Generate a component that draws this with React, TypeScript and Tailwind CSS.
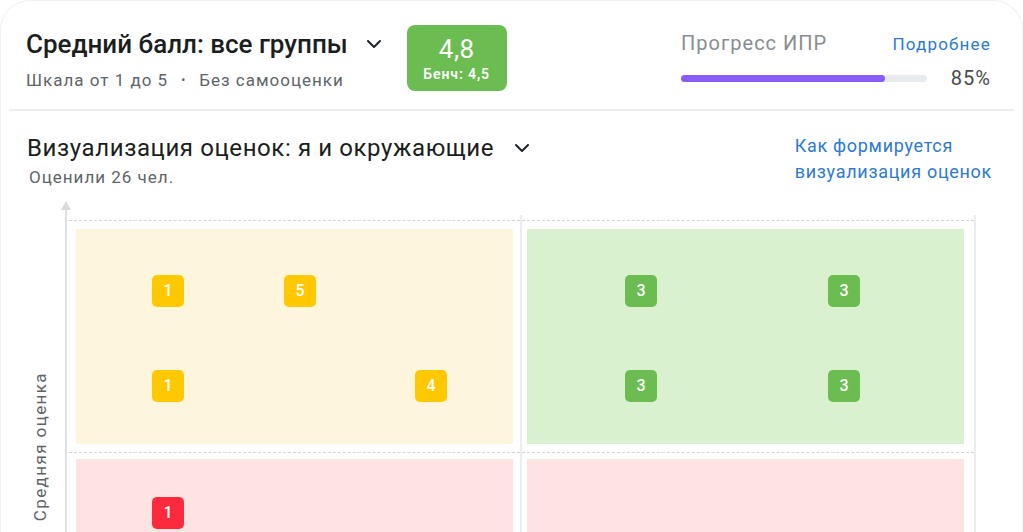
import React from "react";

type Dot = { x: number; y: number; n: number };

const Chevron = () => (
  <svg width="16" height="10" viewBox="0 0 16 10" fill="none" className="shrink-0">
    <path d="M2 2l6 6 6-6" stroke="#1f2326" strokeWidth="2" strokeLinecap="round" strokeLinejoin="round" />
  </svg>
);

function Cell({ bg, badge, dots }: { bg: string; badge: string; dots: Dot[] }) {
  return (
    <div className={`relative h-[215px] w-[437px] ${bg}`}>
      {dots.map((d, i) => (
        <div
          key={i}
          className={`absolute flex h-[32px] w-[32px] items-center justify-center rounded-[5px] text-[16px] font-medium text-white ${badge}`}
          style={{ left: d.x, top: d.y }}
        >
          {d.n}
        </div>
      ))}
    </div>
  );
}

export default function App() {
  return (
    <div className="h-screen overflow-hidden bg-white font-['Roboto',sans-serif]">
      <div className="h-[560px] rounded-t-[30px] border border-b-0 border-[#eff1f2]">
        {/* шапка */}
        <div className="flex items-start pl-[25px] pr-[31px] pt-[24px] pb-[18px]">
          <div className="pt-[3px]">
            <div className="flex items-center gap-[18px]">
              <h1 className="text-[26px] leading-[32px] font-medium text-[#1b1e21]">Средний балл: все группы</h1>
              <Chevron />
            </div>
            <div className="mt-[10px] flex items-center gap-[13px] text-[17px] leading-[20px] tracking-[1px] text-[#5e6469]">
              <span>Шкала от 1 до 5</span>
              <span className="text-[12px]">•</span>
              <span>Без самооценки</span>
            </div>
          </div>
          <div className="ml-[25px] flex h-[66px] w-[100px] flex-col items-center justify-center rounded-[8px] bg-[#6cbd51] text-white">
            <div className="text-[26px] leading-[28px] tracking-[0.5px]">4,8</div>
            <div className="mt-[3px] text-[14px] leading-[16px] font-semibold tracking-[0.9px]">Бенч: 4,5</div>
          </div>
          <div className="ml-auto w-[310px] pt-[5px]">
            <div className="flex items-baseline justify-between">
              <span className="text-[20px] leading-[26px] tracking-[1px] text-[#878d92]">Прогресс ИПР</span>
              <span className="text-[17px] leading-[22px] tracking-[1.2px] text-[#2c7ad3]">Подробнее</span>
            </div>
            <div className="mt-[10px] flex items-center justify-between">
              <div className="h-[7px] w-[246px] rounded-full bg-[#e8ebed]">
                <div className="h-full w-[83%] rounded-full bg-[#8a5cf5]" />
              </div>
              <span className="text-[20px] leading-[24px] tracking-[1px] text-[#464b50]">85%</span>
            </div>
          </div>
        </div>
        <div className="mx-[8px] h-[2px] bg-[#eceef0]" />

        {/* визуализация */}
        <div className="flex items-start pl-[26px] pr-[30px] pt-[21px]">
          <div>
            <div className="flex items-center gap-[20px]">
              <h2 className="text-[24px] leading-[32px] tracking-[0.6px] text-[#1b1e21]">Визуализация оценок: я и окружающие</h2>
              <Chevron />
            </div>
            <div className="mt-[3px] pl-[2px] text-[17px] leading-[20px] tracking-[1px] text-[#5e6469]">Оценили 26 чел.</div>
          </div>
          <div className="ml-auto pt-[1px] text-[18px] leading-[26px] tracking-[0.7px] text-[#2c7ad3]">
            Как формируется
            <br />
            визуализация оценок
          </div>
        </div>

        <div className="mt-[15px] flex">
          <div className="flex w-[64px] items-center justify-center pl-[16px]">
            <span className="mt-[10px] rotate-180 text-[17px] tracking-[1.4px] text-[#5e6469] [writing-mode:vertical-rl]">Средняя оценка</span>
          </div>
          <div className="relative border-l-2 border-[#dde1e4] pt-[13px]">
            <svg width="10" height="9" viewBox="0 0 10 9" className="absolute -left-[6px] -top-[1px]">
              <path d="M5 0L10 9H0z" fill="#d6dadd" />
            </svg>
            <div className="flex">
              <div className="ml-[2px] w-[453px] border-r-2 border-[#eaecee] pt-[5px]">
                <div className="border-t border-dashed border-[#d2d6da] px-[7px] pt-[8px] pb-[8px]">
                  <Cell
                    bg="bg-[#fef6dc]"
                    badge="bg-[#ffc800]"
                    dots={[
                      { x: 76, y: 46, n: 1 },
                      { x: 208, y: 46, n: 5 },
                      { x: 76, y: 141, n: 1 },
                      { x: 339, y: 141, n: 4 },
                    ]}
                  />
                </div>
                <div className="border-t border-dashed border-[#d2d6da] px-[7px] pt-[6px] pb-[8px]">
                  <Cell bg="bg-[#fee3e3]" badge="bg-[#fd2a3e]" dots={[{ x: 76, y: 38, n: 1 }]} />
                </div>
              </div>
              <div className="w-[454px] border-r-2 border-[#eaecee] pt-[5px]">
                <div className="border-t border-dashed border-[#d2d6da] pl-[5px] pr-[10px] pt-[8px] pb-[8px]">
                  <Cell
                    bg="bg-[#d9f1ce]"
                    badge="bg-[#6cbd51]"
                    dots={[
                      { x: 98, y: 46, n: 3 },
                      { x: 301, y: 46, n: 3 },
                      { x: 98, y: 141, n: 3 },
                      { x: 301, y: 141, n: 3 },
                    ]}
                  />
                </div>
                <div className="border-t border-dashed border-[#d2d6da] pl-[5px] pr-[10px] pt-[6px] pb-[8px]">
                  <Cell bg="bg-[#fee3e3]" badge="bg-[#fd2a3e]" dots={[]} />
                </div>
              </div>
            </div>
          </div>
        </div>
      </div>
    </div>
  );
}
